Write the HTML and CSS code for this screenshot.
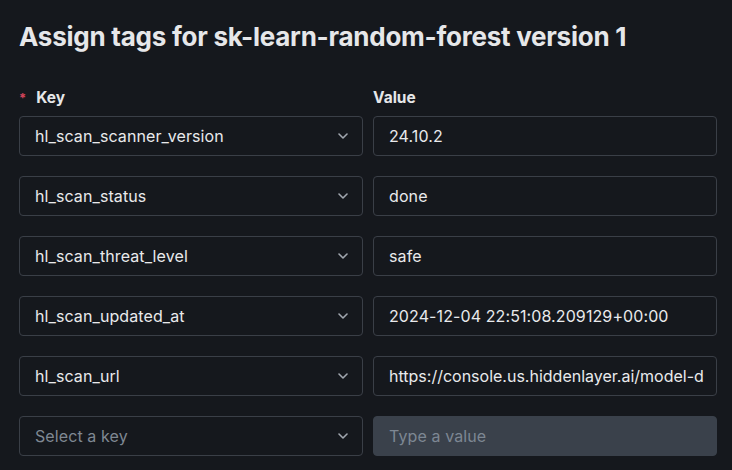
FILE: index.html
```html
<!DOCTYPE html>
<html>
<head>
<meta charset="utf-8">
<link rel="stylesheet" href="styles.css">
</head>
<body>
<div class="dialog">
  <h1 class="title">Assign tags for sk-learn-random-forest version 1</h1>
  <div class="grid">
    <div class="label"><span class="req">*</span>Key</div>
    <div class="label">Value</div>

    <div class="select"><span class="val">hl_scan_scanner_version</span><svg class="chev" width="10" height="6" viewBox="0 0 10 6"><path d="M1 1l4 4 4-4" fill="none" stroke="currentColor" stroke-width="1.6" stroke-linecap="round" stroke-linejoin="round"/></svg></div>
    <div class="input"><span class="val">24.10.2</span></div>

    <div class="select"><span class="val">hl_scan_status</span><svg class="chev" width="10" height="6" viewBox="0 0 10 6"><path d="M1 1l4 4 4-4" fill="none" stroke="currentColor" stroke-width="1.6" stroke-linecap="round" stroke-linejoin="round"/></svg></div>
    <div class="input"><span class="val">done</span></div>

    <div class="select"><span class="val">hl_scan_threat_level</span><svg class="chev" width="10" height="6" viewBox="0 0 10 6"><path d="M1 1l4 4 4-4" fill="none" stroke="currentColor" stroke-width="1.6" stroke-linecap="round" stroke-linejoin="round"/></svg></div>
    <div class="input"><span class="val">safe</span></div>

    <div class="select"><span class="val">hl_scan_updated_at</span><svg class="chev" width="10" height="6" viewBox="0 0 10 6"><path d="M1 1l4 4 4-4" fill="none" stroke="currentColor" stroke-width="1.6" stroke-linecap="round" stroke-linejoin="round"/></svg></div>
    <div class="input"><span class="val">2024-12-04 22:51:08.209129+00:00</span></div>

    <div class="select"><span class="val">hl_scan_url</span><svg class="chev" width="10" height="6" viewBox="0 0 10 6"><path d="M1 1l4 4 4-4" fill="none" stroke="currentColor" stroke-width="1.6" stroke-linecap="round" stroke-linejoin="round"/></svg></div>
    <div class="input"><span class="val url">https://console.us.hiddenlayer.ai/model-d</span></div>

    <div class="select"><span class="val placeholder">Select a key</span><svg class="chev" width="10" height="6" viewBox="0 0 10 6"><path d="M1 1l4 4 4-4" fill="none" stroke="currentColor" stroke-width="1.6" stroke-linecap="round" stroke-linejoin="round"/></svg></div>
    <div class="input disabled"><span class="val placeholder">Type a value</span></div>
  </div>
</div>
</body>
</html>
```

FILE: styles.css
```css
html, body {
  margin: 0;
  padding: 0;
  background: #15181d;
}
body {
  font-family: Inter, "Noto Sans", sans-serif;
  color: #e9eaec;
  width: 732px;
  height: 470px;
  overflow: hidden;
}
.dialog {
  padding: 19px 15px 0 19px;
}
.title {
  margin: 0;
  font-size: 26px;
  font-weight: 700;
  line-height: 36px;
  color: #e6e7e9;
  letter-spacing: -0.25px;
}
.grid {
  margin-top: 33px;
  display: grid;
  grid-template-columns: 344px 344px;
  column-gap: 10px;
  row-gap: 20px;
}
.label {
  font-size: 15.5px;
  font-weight: 700;
  line-height: 20px;
  color: #e6e7e9;
  margin-bottom: -12px;
  display: flex;
  align-items: center;
}
.req {
  color: #d2445a;
  font-size: 13px;
  margin-right: 10px;
  line-height: 12px;
}
.select, .input {
  box-sizing: border-box;
  height: 40px;
  border: 1px solid #3a3f47;
  border-radius: 4px;
  display: flex;
  align-items: center;
  padding: 0 15px;
  font-size: 16px;
  letter-spacing: 0.1px;
  color: #e9eaec;
  white-space: nowrap;
  overflow: hidden;
}
.val {
  flex: none;
}
.url {
  letter-spacing: 0;
}
.select {
  justify-content: space-between;
}
.chev {
  color: #a0a6ae;
  margin-right: -1px;
  flex: none;
}
.placeholder {
  color: #7f8893;
}
.input.disabled {
  background: #3a414b;
  border-color: #3a414b;
}
.input.disabled .placeholder {
  color: #7d8793;
}
```
